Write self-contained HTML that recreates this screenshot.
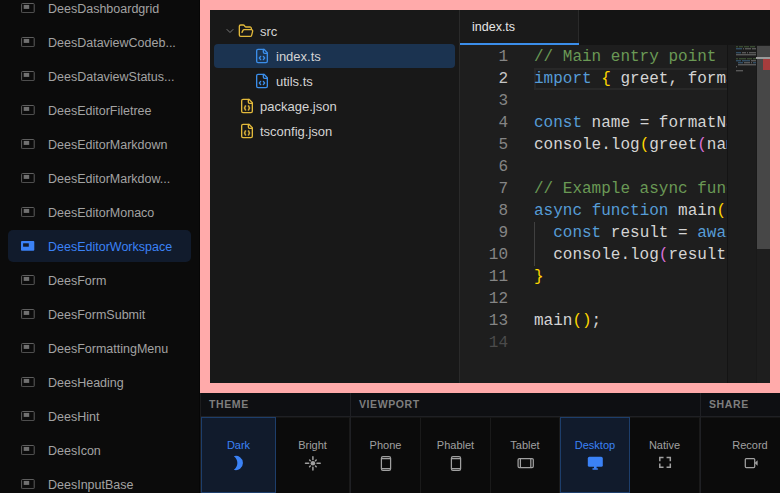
<!DOCTYPE html>
<html><head><meta charset="utf-8"><style>
*{margin:0;padding:0;box-sizing:border-box}
html,body{width:780px;height:493px;overflow:hidden;background:#0b0b0b;font-family:"Liberation Sans",sans-serif}
#side{position:absolute;left:0;top:0;width:200px;height:493px;background:#0b0b0b;border-right:1px solid #060606}
.it{position:absolute;left:8px;width:183px;height:32px;border-radius:5px}
.it svg{position:absolute;left:13px;top:11px}
.it span{position:absolute;left:40px;top:1px;line-height:32px;font-size:12.5px;color:#a3a3a3;white-space:nowrap}
.it.sel{background:#111b2c}
.it.sel span{color:#3b82f6}
#frame{position:absolute;left:200px;top:0;width:580px;height:393px;background:#ffaaaa}
#ws{position:absolute;left:210px;top:10px;width:560px;height:373px;background:#1e1e1e;overflow:hidden}
#tree{position:absolute;left:0;top:0;width:250px;height:373px;background:#181818;border-right:1px solid #2a2a2a}
.row{position:absolute;height:24px;font-size:13px;color:#d4d4d4;line-height:24px;white-space:nowrap}
.row svg{position:absolute}
#tabs{position:absolute;left:250px;top:0;width:310px;height:35px;background:#141414}
#tab{position:absolute;left:0;top:0;width:119px;height:35px;background:#1a1a1a;border-right:1px solid #2a2a2a}
#tab span{position:absolute;left:12px;top:0;line-height:34px;font-size:12.5px;color:#e6e6e6}
#tab i{position:absolute;left:0;bottom:0;width:119px;height:2px;background:#3b8eea}
#ed{position:absolute;left:250px;top:35px;width:310px;height:338px;background:#1e1e1e;overflow:hidden}
.ln{position:absolute;left:0;width:48px;text-align:right;font-family:"Liberation Mono",monospace;font-size:16px;line-height:22px;color:#858585}
.cd{position:absolute;left:74px;font-family:"Liberation Mono",monospace;font-size:16px;line-height:22px;color:#d4d4d4;white-space:pre}
.k{color:#569cd6}.c{color:#6a9955}.y{color:#ffd700}.p{color:#da70d6}
#tb{position:absolute;left:200px;top:393px;width:580px;height:100px;background:#0e0f12;overflow:hidden}
.hd{position:absolute;top:0;height:24px;line-height:23px;font-size:10.5px;font-weight:bold;letter-spacing:0.6px;color:#7e7e7e;padding-left:9px}
.hline{position:absolute;left:0;top:23px;width:580px;height:1px;background:#1f2024}
.btn{position:absolute;top:24px;height:76px;background:#0b0b0b;text-align:center;border-right:1px solid #1a1a1a;border-top:1px solid #151515}
.btn span{position:absolute;left:0;right:0;top:21px;font-size:11px;color:#a0a0a0}
.btn svg{position:absolute}
.btn.on{background:#111b2c;border:1px solid #1d3e6b}
.btn.on span{color:#3b82f6}
.vsep{position:absolute;width:1px;background:#1f2024}
</style></head><body>
<div id="side"><div class="it" style="top:-8px"><svg width="14" height="10" viewBox="0 0 14 10"><rect x="0.6" y="0.5" width="12.6" height="9.2" rx="0.8" fill="none" stroke="#5e5e5e"/><rect x="2.7" y="1.9" width="5.5" height="4" fill="#707070"/></svg><span>DeesDashboardgrid</span></div><div class="it" style="top:26px"><svg width="14" height="10" viewBox="0 0 14 10"><rect x="0.6" y="0.5" width="12.6" height="9.2" rx="0.8" fill="none" stroke="#5e5e5e"/><rect x="2.7" y="1.9" width="5.5" height="4" fill="#707070"/></svg><span>DeesDataviewCodeb...</span></div><div class="it" style="top:60px"><svg width="14" height="10" viewBox="0 0 14 10"><rect x="0.6" y="0.5" width="12.6" height="9.2" rx="0.8" fill="none" stroke="#5e5e5e"/><rect x="2.7" y="1.9" width="5.5" height="4" fill="#707070"/></svg><span>DeesDataviewStatus...</span></div><div class="it" style="top:94px"><svg width="14" height="10" viewBox="0 0 14 10"><rect x="0.6" y="0.5" width="12.6" height="9.2" rx="0.8" fill="none" stroke="#5e5e5e"/><rect x="2.7" y="1.9" width="5.5" height="4" fill="#707070"/></svg><span>DeesEditorFiletree</span></div><div class="it" style="top:128px"><svg width="14" height="10" viewBox="0 0 14 10"><rect x="0.6" y="0.5" width="12.6" height="9.2" rx="0.8" fill="none" stroke="#5e5e5e"/><rect x="2.7" y="1.9" width="5.5" height="4" fill="#707070"/></svg><span>DeesEditorMarkdown</span></div><div class="it" style="top:162px"><svg width="14" height="10" viewBox="0 0 14 10"><rect x="0.6" y="0.5" width="12.6" height="9.2" rx="0.8" fill="none" stroke="#5e5e5e"/><rect x="2.7" y="1.9" width="5.5" height="4" fill="#707070"/></svg><span>DeesEditorMarkdow...</span></div><div class="it" style="top:196px"><svg width="14" height="10" viewBox="0 0 14 10"><rect x="0.6" y="0.5" width="12.6" height="9.2" rx="0.8" fill="none" stroke="#5e5e5e"/><rect x="2.7" y="1.9" width="5.5" height="4" fill="#707070"/></svg><span>DeesEditorMonaco</span></div><div class="it sel" style="top:230px"><svg width="14" height="10" viewBox="0 0 14 10"><rect x="-0.1" y="0.1" width="13.4" height="9.7" rx="1" fill="#3b82f6"/><rect x="2.1" y="2.3" width="5.7" height="3.4" fill="#111b2c"/></svg><span>DeesEditorWorkspace</span></div><div class="it" style="top:264px"><svg width="14" height="10" viewBox="0 0 14 10"><rect x="0.6" y="0.5" width="12.6" height="9.2" rx="0.8" fill="none" stroke="#5e5e5e"/><rect x="2.7" y="1.9" width="5.5" height="4" fill="#707070"/></svg><span>DeesForm</span></div><div class="it" style="top:298px"><svg width="14" height="10" viewBox="0 0 14 10"><rect x="0.6" y="0.5" width="12.6" height="9.2" rx="0.8" fill="none" stroke="#5e5e5e"/><rect x="2.7" y="1.9" width="5.5" height="4" fill="#707070"/></svg><span>DeesFormSubmit</span></div><div class="it" style="top:332px"><svg width="14" height="10" viewBox="0 0 14 10"><rect x="0.6" y="0.5" width="12.6" height="9.2" rx="0.8" fill="none" stroke="#5e5e5e"/><rect x="2.7" y="1.9" width="5.5" height="4" fill="#707070"/></svg><span>DeesFormattingMenu</span></div><div class="it" style="top:366px"><svg width="14" height="10" viewBox="0 0 14 10"><rect x="0.6" y="0.5" width="12.6" height="9.2" rx="0.8" fill="none" stroke="#5e5e5e"/><rect x="2.7" y="1.9" width="5.5" height="4" fill="#707070"/></svg><span>DeesHeading</span></div><div class="it" style="top:400px"><svg width="14" height="10" viewBox="0 0 14 10"><rect x="0.6" y="0.5" width="12.6" height="9.2" rx="0.8" fill="none" stroke="#5e5e5e"/><rect x="2.7" y="1.9" width="5.5" height="4" fill="#707070"/></svg><span>DeesHint</span></div><div class="it" style="top:434px"><svg width="14" height="10" viewBox="0 0 14 10"><rect x="0.6" y="0.5" width="12.6" height="9.2" rx="0.8" fill="none" stroke="#5e5e5e"/><rect x="2.7" y="1.9" width="5.5" height="4" fill="#707070"/></svg><span>DeesIcon</span></div><div class="it" style="top:468px"><svg width="14" height="10" viewBox="0 0 14 10"><rect x="0.6" y="0.5" width="12.6" height="9.2" rx="0.8" fill="none" stroke="#5e5e5e"/><rect x="2.7" y="1.9" width="5.5" height="4" fill="#707070"/></svg><span>DeesInputBase</span></div></div>
<div id="frame"></div>
<div id="ws">
<div id="tree"><svg style="position:absolute;left:14px;top:15px" width="12" height="12" viewBox="0 0 24 24" fill="none" stroke-width="2" stroke-linecap="round" stroke-linejoin="round" stroke="#7a7a7a"><path d="m6 9 6 6 6-6"/></svg><div class="row" style="left:0;top:9px;width:249px"><svg style="left:28px;top:4px" width="16" height="16" viewBox="0 0 24 24" fill="none" stroke-width="2" stroke-linecap="round" stroke-linejoin="round" stroke="#e2b93b"><path d="m6 14 1.5-2.9A2 2 0 0 1 9.24 10H20a2 2 0 0 1 1.94 2.5l-1.54 6a2 2 0 0 1-1.950 1.5H4a2 2 0 0 1-2-2V5a2 2 0 0 1 2-2h3.9a2 2 0 0 1 1.69.9l.81 1.2a2 2 0 0 0 1.67.9H18a2 2 0 0 1 2 2v2"/></svg><span style="position:absolute;left:50px;top:1px">src</span></div><div class="row" style="left:4px;top:34px;width:241px;background:#1b3350;border-radius:4px"><svg style="left:40px;top:4px" width="16" height="16" viewBox="0 0 24 24" fill="none" stroke-width="2" stroke-linecap="round" stroke-linejoin="round" stroke="#3b8eea"><path d="M10 12.5 8 15l2 2.5"/><path d="m14 12.5 2 2.5-2 2.5"/><path d="M14 2v4a2 2 0 0 0 2 2h4"/><path d="M15 2H6a2 2 0 0 0-2 2v16a2 2 0 0 0 2 2h12a2 2 0 0 0 2-2V7z"/></svg><span style="position:absolute;left:62px;top:1px">index.ts</span></div><div class="row" style="left:0;top:59px;width:249px"><svg style="left:44px;top:4px" width="16" height="16" viewBox="0 0 24 24" fill="none" stroke-width="2" stroke-linecap="round" stroke-linejoin="round" stroke="#3b8eea"><path d="M10 12.5 8 15l2 2.5"/><path d="m14 12.5 2 2.5-2 2.5"/><path d="M14 2v4a2 2 0 0 0 2 2h4"/><path d="M15 2H6a2 2 0 0 0-2 2v16a2 2 0 0 0 2 2h12a2 2 0 0 0 2-2V7z"/></svg><span style="position:absolute;left:66px;top:1px">utils.ts</span></div><div class="row" style="left:0;top:84px;width:249px"><svg style="left:29px;top:4px" width="16" height="16" viewBox="0 0 24 24" fill="none" stroke-width="2" stroke-linecap="round" stroke-linejoin="round" stroke="#e2b93b"><path d="M15 2H6a2 2 0 0 0-2 2v16a2 2 0 0 0 2 2h12a2 2 0 0 0 2-2V7Z"/><path d="M14 2v4a2 2 0 0 0 2 2h4"/><path d="M10 12a1 1 0 0 0-1 1v1a1 1 0 0 1-1 1 1 1 0 0 1 1 1v1a1 1 0 0 0 1 1"/><path d="M14 18a1 1 0 0 0 1-1v-1a1 1 0 0 1 1-1 1 1 0 0 1-1-1v-1a1 1 0 0 0-1-1"/></svg><span style="position:absolute;left:50px;top:1px">package.json</span></div><div class="row" style="left:0;top:109px;width:249px"><svg style="left:29px;top:4px" width="16" height="16" viewBox="0 0 24 24" fill="none" stroke-width="2" stroke-linecap="round" stroke-linejoin="round" stroke="#e2b93b"><path d="M15 2H6a2 2 0 0 0-2 2v16a2 2 0 0 0 2 2h12a2 2 0 0 0 2-2V7Z"/><path d="M14 2v4a2 2 0 0 0 2 2h4"/><path d="M10 12a1 1 0 0 0-1 1v1a1 1 0 0 1-1 1 1 1 0 0 1 1 1v1a1 1 0 0 0 1 1"/><path d="M14 18a1 1 0 0 0 1-1v-1a1 1 0 0 1 1-1 1 1 0 0 1-1-1v-1a1 1 0 0 0-1-1"/></svg><span style="position:absolute;left:50px;top:1px">tsconfig.json</span></div></div>
<div id="tabs"><div id="tab"><span>index.ts</span><i></i></div></div>
<div id="ed"><div style="position:absolute;left:74px;top:23px;width:300px;height:22px;border:2px solid #282828;border-right:none"></div><div style="position:absolute;left:74px;top:177px;width:1px;height:44px;background:#404040"></div><div class="ln" style="top:1px;color:#858585">1</div><div class="cd" style="top:1px"><span class="c">// Main entry point</span></div><div class="ln" style="top:23px;color:#c6c6c6">2</div><div class="cd" style="top:23px"><span class="k">import</span> <span class="y">{</span> greet, formatName <span class="y">}</span> <span class="k">from</span> ./utils</div><div class="ln" style="top:45px;color:#858585">3</div><div class="cd" style="top:45px"></div><div class="ln" style="top:67px;color:#858585">4</div><div class="cd" style="top:67px"><span class="k">const</span> name = formatName(<span class="c"></span>)</div><div class="ln" style="top:89px;color:#858585">5</div><div class="cd" style="top:89px">console.log<span class="y">(</span>greet<span class="p">(</span>name<span class="p">)</span><span class="y">)</span>;</div><div class="ln" style="top:111px;color:#858585">6</div><div class="cd" style="top:111px"></div><div class="ln" style="top:133px;color:#858585">7</div><div class="cd" style="top:133px"><span class="c">// Example async function</span></div><div class="ln" style="top:155px;color:#858585">8</div><div class="cd" style="top:155px"><span class="k">async</span> <span class="k">function</span> main<span class="y">()</span> <span class="y">{</span></div><div class="ln" style="top:177px;color:#858585">9</div><div class="cd" style="top:177px">  <span class="k">const</span> result = <span class="k">await</span> fetch</div><div class="ln" style="top:199px;color:#858585">10</div><div class="cd" style="top:199px">  console.log<span class="p">(</span>result<span class="p">)</span>;</div><div class="ln" style="top:221px;color:#858585">11</div><div class="cd" style="top:221px"><span class="y">}</span></div><div class="ln" style="top:243px;color:#858585">12</div><div class="cd" style="top:243px"></div><div class="ln" style="top:265px;color:#858585">13</div><div class="cd" style="top:265px">main<span class="y">()</span>;</div><div class="ln" style="top:287px;color:#4b4b4b">14</div><div class="cd" style="top:287px"></div><div style="position:absolute;left:267px;top:0;width:29px;height:338px;background:#1c1c1c;border-left:1px solid #141414"></div><svg style="position:absolute;left:276px;top:1px;opacity:.38" width="20" height="30"><rect x="0" y="0" width="1" height="1.4" fill="#6a9955"/><rect x="1" y="0" width="1" height="1.4" fill="#6a9955"/><rect x="3" y="0" width="1" height="1.4" fill="#6a9955"/><rect x="4" y="0" width="1" height="1.4" fill="#6a9955"/><rect x="5" y="0" width="1" height="1.4" fill="#6a9955"/><rect x="6" y="0" width="1" height="1.4" fill="#6a9955"/><rect x="8" y="0" width="1" height="1.4" fill="#6a9955"/><rect x="9" y="0" width="1" height="1.4" fill="#6a9955"/><rect x="10" y="0" width="1" height="1.4" fill="#6a9955"/><rect x="11" y="0" width="1" height="1.4" fill="#6a9955"/><rect x="12" y="0" width="1" height="1.4" fill="#6a9955"/><rect x="14" y="0" width="1" height="1.4" fill="#6a9955"/><rect x="15" y="0" width="1" height="1.4" fill="#6a9955"/><rect x="16" y="0" width="1" height="1.4" fill="#6a9955"/><rect x="17" y="0" width="1" height="1.4" fill="#6a9955"/><rect x="18" y="0" width="1" height="1.4" fill="#6a9955"/><rect x="0" y="2" width="1" height="1.4" fill="#569cd6"/><rect x="1" y="2" width="1" height="1.4" fill="#569cd6"/><rect x="2" y="2" width="1" height="1.4" fill="#569cd6"/><rect x="3" y="2" width="1" height="1.4" fill="#569cd6"/><rect x="4" y="2" width="1" height="1.4" fill="#569cd6"/><rect x="5" y="2" width="1" height="1.4" fill="#569cd6"/><rect x="7" y="2" width="1" height="1.4" fill="#bbbbbb"/><rect x="9" y="2" width="1" height="1.4" fill="#bbbbbb"/><rect x="10" y="2" width="1" height="1.4" fill="#bbbbbb"/><rect x="11" y="2" width="1" height="1.4" fill="#bbbbbb"/><rect x="12" y="2" width="1" height="1.4" fill="#bbbbbb"/><rect x="13" y="2" width="1" height="1.4" fill="#bbbbbb"/><rect x="14" y="2" width="1" height="1.4" fill="#bbbbbb"/><rect x="16" y="2" width="1" height="1.4" fill="#bbbbbb"/><rect x="17" y="2" width="1" height="1.4" fill="#bbbbbb"/><rect x="18" y="2" width="1" height="1.4" fill="#bbbbbb"/><rect x="19" y="2" width="1" height="1.4" fill="#bbbbbb"/><rect x="0" y="6" width="1" height="1.4" fill="#569cd6"/><rect x="1" y="6" width="1" height="1.4" fill="#569cd6"/><rect x="2" y="6" width="1" height="1.4" fill="#569cd6"/><rect x="3" y="6" width="1" height="1.4" fill="#569cd6"/><rect x="4" y="6" width="1" height="1.4" fill="#569cd6"/><rect x="6" y="6" width="1" height="1.4" fill="#bbbbbb"/><rect x="7" y="6" width="1" height="1.4" fill="#bbbbbb"/><rect x="8" y="6" width="1" height="1.4" fill="#bbbbbb"/><rect x="9" y="6" width="1" height="1.4" fill="#bbbbbb"/><rect x="11" y="6" width="1" height="1.4" fill="#bbbbbb"/><rect x="13" y="6" width="1" height="1.4" fill="#bbbbbb"/><rect x="14" y="6" width="1" height="1.4" fill="#bbbbbb"/><rect x="15" y="6" width="1" height="1.4" fill="#bbbbbb"/><rect x="16" y="6" width="1" height="1.4" fill="#bbbbbb"/><rect x="17" y="6" width="1" height="1.4" fill="#bbbbbb"/><rect x="18" y="6" width="1" height="1.4" fill="#bbbbbb"/><rect x="19" y="6" width="1" height="1.4" fill="#bbbbbb"/><rect x="0" y="8" width="1" height="1.4" fill="#bbbbbb"/><rect x="1" y="8" width="1" height="1.4" fill="#bbbbbb"/><rect x="2" y="8" width="1" height="1.4" fill="#bbbbbb"/><rect x="3" y="8" width="1" height="1.4" fill="#bbbbbb"/><rect x="4" y="8" width="1" height="1.4" fill="#bbbbbb"/><rect x="5" y="8" width="1" height="1.4" fill="#bbbbbb"/><rect x="6" y="8" width="1" height="1.4" fill="#bbbbbb"/><rect x="7" y="8" width="1" height="1.4" fill="#bbbbbb"/><rect x="8" y="8" width="1" height="1.4" fill="#bbbbbb"/><rect x="9" y="8" width="1" height="1.4" fill="#bbbbbb"/><rect x="10" y="8" width="1" height="1.4" fill="#bbbbbb"/><rect x="11" y="8" width="1" height="1.4" fill="#bbbbbb"/><rect x="12" y="8" width="1" height="1.4" fill="#bbbbbb"/><rect x="13" y="8" width="1" height="1.4" fill="#bbbbbb"/><rect x="14" y="8" width="1" height="1.4" fill="#bbbbbb"/><rect x="15" y="8" width="1" height="1.4" fill="#bbbbbb"/><rect x="16" y="8" width="1" height="1.4" fill="#bbbbbb"/><rect x="17" y="8" width="1" height="1.4" fill="#bbbbbb"/><rect x="18" y="8" width="1" height="1.4" fill="#bbbbbb"/><rect x="19" y="8" width="1" height="1.4" fill="#bbbbbb"/><rect x="0" y="12" width="1" height="1.4" fill="#6a9955"/><rect x="1" y="12" width="1" height="1.4" fill="#6a9955"/><rect x="3" y="12" width="1" height="1.4" fill="#6a9955"/><rect x="4" y="12" width="1" height="1.4" fill="#6a9955"/><rect x="5" y="12" width="1" height="1.4" fill="#6a9955"/><rect x="6" y="12" width="1" height="1.4" fill="#6a9955"/><rect x="7" y="12" width="1" height="1.4" fill="#6a9955"/><rect x="8" y="12" width="1" height="1.4" fill="#6a9955"/><rect x="9" y="12" width="1" height="1.4" fill="#6a9955"/><rect x="11" y="12" width="1" height="1.4" fill="#6a9955"/><rect x="12" y="12" width="1" height="1.4" fill="#6a9955"/><rect x="13" y="12" width="1" height="1.4" fill="#6a9955"/><rect x="14" y="12" width="1" height="1.4" fill="#6a9955"/><rect x="15" y="12" width="1" height="1.4" fill="#6a9955"/><rect x="17" y="12" width="1" height="1.4" fill="#6a9955"/><rect x="18" y="12" width="1" height="1.4" fill="#6a9955"/><rect x="19" y="12" width="1" height="1.4" fill="#6a9955"/><rect x="0" y="14" width="1" height="1.4" fill="#569cd6"/><rect x="1" y="14" width="1" height="1.4" fill="#569cd6"/><rect x="2" y="14" width="1" height="1.4" fill="#569cd6"/><rect x="3" y="14" width="1" height="1.4" fill="#569cd6"/><rect x="4" y="14" width="1" height="1.4" fill="#569cd6"/><rect x="6" y="14" width="1" height="1.4" fill="#569cd6"/><rect x="7" y="14" width="1" height="1.4" fill="#569cd6"/><rect x="8" y="14" width="1" height="1.4" fill="#569cd6"/><rect x="9" y="14" width="1" height="1.4" fill="#569cd6"/><rect x="10" y="14" width="1" height="1.4" fill="#569cd6"/><rect x="11" y="14" width="1" height="1.4" fill="#569cd6"/><rect x="12" y="14" width="1" height="1.4" fill="#569cd6"/><rect x="13" y="14" width="1" height="1.4" fill="#569cd6"/><rect x="15" y="14" width="1" height="1.4" fill="#bbbbbb"/><rect x="16" y="14" width="1" height="1.4" fill="#bbbbbb"/><rect x="17" y="14" width="1" height="1.4" fill="#bbbbbb"/><rect x="18" y="14" width="1" height="1.4" fill="#bbbbbb"/><rect x="19" y="14" width="1" height="1.4" fill="#bbbbbb"/><rect x="2" y="16" width="1" height="1.4" fill="#569cd6"/><rect x="3" y="16" width="1" height="1.4" fill="#569cd6"/><rect x="4" y="16" width="1" height="1.4" fill="#569cd6"/><rect x="5" y="16" width="1" height="1.4" fill="#569cd6"/><rect x="6" y="16" width="1" height="1.4" fill="#569cd6"/><rect x="8" y="16" width="1" height="1.4" fill="#bbbbbb"/><rect x="9" y="16" width="1" height="1.4" fill="#bbbbbb"/><rect x="10" y="16" width="1" height="1.4" fill="#bbbbbb"/><rect x="11" y="16" width="1" height="1.4" fill="#bbbbbb"/><rect x="12" y="16" width="1" height="1.4" fill="#bbbbbb"/><rect x="13" y="16" width="1" height="1.4" fill="#bbbbbb"/><rect x="15" y="16" width="1" height="1.4" fill="#bbbbbb"/><rect x="17" y="16" width="1" height="1.4" fill="#569cd6"/><rect x="18" y="16" width="1" height="1.4" fill="#569cd6"/><rect x="19" y="16" width="1" height="1.4" fill="#569cd6"/><rect x="2" y="18" width="1" height="1.4" fill="#bbbbbb"/><rect x="3" y="18" width="1" height="1.4" fill="#bbbbbb"/><rect x="4" y="18" width="1" height="1.4" fill="#bbbbbb"/><rect x="5" y="18" width="1" height="1.4" fill="#bbbbbb"/><rect x="6" y="18" width="1" height="1.4" fill="#bbbbbb"/><rect x="7" y="18" width="1" height="1.4" fill="#bbbbbb"/><rect x="8" y="18" width="1" height="1.4" fill="#bbbbbb"/><rect x="9" y="18" width="1" height="1.4" fill="#bbbbbb"/><rect x="10" y="18" width="1" height="1.4" fill="#bbbbbb"/><rect x="11" y="18" width="1" height="1.4" fill="#bbbbbb"/><rect x="12" y="18" width="1" height="1.4" fill="#bbbbbb"/><rect x="13" y="18" width="1" height="1.4" fill="#bbbbbb"/><rect x="14" y="18" width="1" height="1.4" fill="#bbbbbb"/><rect x="15" y="18" width="1" height="1.4" fill="#bbbbbb"/><rect x="16" y="18" width="1" height="1.4" fill="#bbbbbb"/><rect x="17" y="18" width="1" height="1.4" fill="#bbbbbb"/><rect x="18" y="18" width="1" height="1.4" fill="#bbbbbb"/><rect x="19" y="18" width="1" height="1.4" fill="#bbbbbb"/><rect x="0" y="20" width="1" height="1.4" fill="#bbbbbb"/><rect x="0" y="24" width="1" height="1.4" fill="#bbbbbb"/><rect x="1" y="24" width="1" height="1.4" fill="#bbbbbb"/><rect x="2" y="24" width="1" height="1.4" fill="#bbbbbb"/><rect x="3" y="24" width="1" height="1.4" fill="#bbbbbb"/><rect x="4" y="24" width="1" height="1.4" fill="#bbbbbb"/><rect x="5" y="24" width="1" height="1.4" fill="#bbbbbb"/><rect x="6" y="24" width="1" height="1.4" fill="#bbbbbb"/></svg><div style="position:absolute;left:296px;top:0;width:14px;height:338px;background:#1e1e1e;border-left:1px solid #191919"></div><div style="position:absolute;left:297px;top:1px;width:13px;height:203px;background:#474747"></div><div style="position:absolute;left:296px;top:12px;width:14px;height:2px;background:#9a9a9a"></div><div style="position:absolute;left:303px;top:14px;width:7px;height:11px;background:#a63c3c"></div></div>
</div>
<div id="tb"><div class="hd" style="left:0;width:150px">THEME</div><div class="hd" style="left:150px;width:350px">VIEWPORT</div><div class="hd" style="left:500px;width:80px">SHARE</div><div class="hline"></div><div class="vsep" style="left:0;top:0;height:100px;background:#1c1c1e"></div><div class="btn on" style="left:1px;width:75px"><span>Dark</span></div><div class="btn" style="left:76px;width:74px"><span>Bright</span></div><div class="btn" style="left:151px;width:70px"><span>Phone</span></div><div class="btn" style="left:221px;width:70px"><span>Phablet</span></div><div class="btn" style="left:291px;width:69px"><span>Tablet</span></div><div class="btn on" style="left:360px;width:70px"><span>Desktop</span></div><div class="btn" style="left:430px;width:70px"><span>Native</span></div><div class="btn" style="left:501px;width:99px"><span>Record</span></div><svg style="position:absolute;left:0;top:0" width="580" height="100" viewBox="200 393 580 100">
<path d="M233.8 456.2 A7.1 7.1 0 1 1 233.8 469.8 A8.3 8.3 0 0 0 233.8 456.2Z" fill="#3b82f6"/>
<g stroke="#a0a0a0" stroke-width="1.5" stroke-linecap="round" fill="none">
<circle cx="312.9" cy="463.3" r="2.3" fill="#a0a0a0" stroke="none"/>
<path d="M312.9 456.8v2.6M312.9 467.3v2.6M305.5 463.3h3.2M317 463.3h3.2M309.6 460l.7.7M315.5 466l.7.7M316.2 460l-.7.7M310.3 466l-.7.7"/>
</g>
<g stroke="#a0a0a0" stroke-width="1.25" fill="none">
<rect x="381.4" y="456.6" width="9.2" height="13.8" rx="1.6"/><path d="M381.4 458.6h9.2M381.4 468.6h9.2"/>
<rect x="451.4" y="456.6" width="9.2" height="13.8" rx="1.6"/><path d="M451.4 458.6h9.2M451.4 468.6h9.2"/>
<rect x="518.1" y="458.5" width="15.2" height="9" rx="1.3"/><path d="M520.4 458.5v9M530.8 458.5v9"/>
<rect x="745.3" y="458.5" width="9.4" height="9" rx="1"/>
</g>
<path d="M754.6 463 757.6 460.2v5.6Z" fill="#a0a0a0"/>
<g stroke="#a0a0a0" stroke-width="1.5" fill="none" stroke-linecap="square">
<path d="M659.8 460.5v-3h3M667.3 457.5h3v3M670.3 464.3v3h-3M662.8 467.3h-3v-3"/>
</g>
<rect x="587.8" y="456.8" width="15" height="10" rx="1.6" fill="#3b82f6"/>
<rect x="594" y="466" width="2.6" height="2.3" fill="#3b82f6"/>
<ellipse cx="595.2" cy="468.9" rx="3.1" ry="0.9" fill="#3b82f6"/>
</svg><div class="vsep" style="left:150px;top:0;height:100px"></div><div class="vsep" style="left:500px;top:0;height:100px"></div></div>
</body></html>
